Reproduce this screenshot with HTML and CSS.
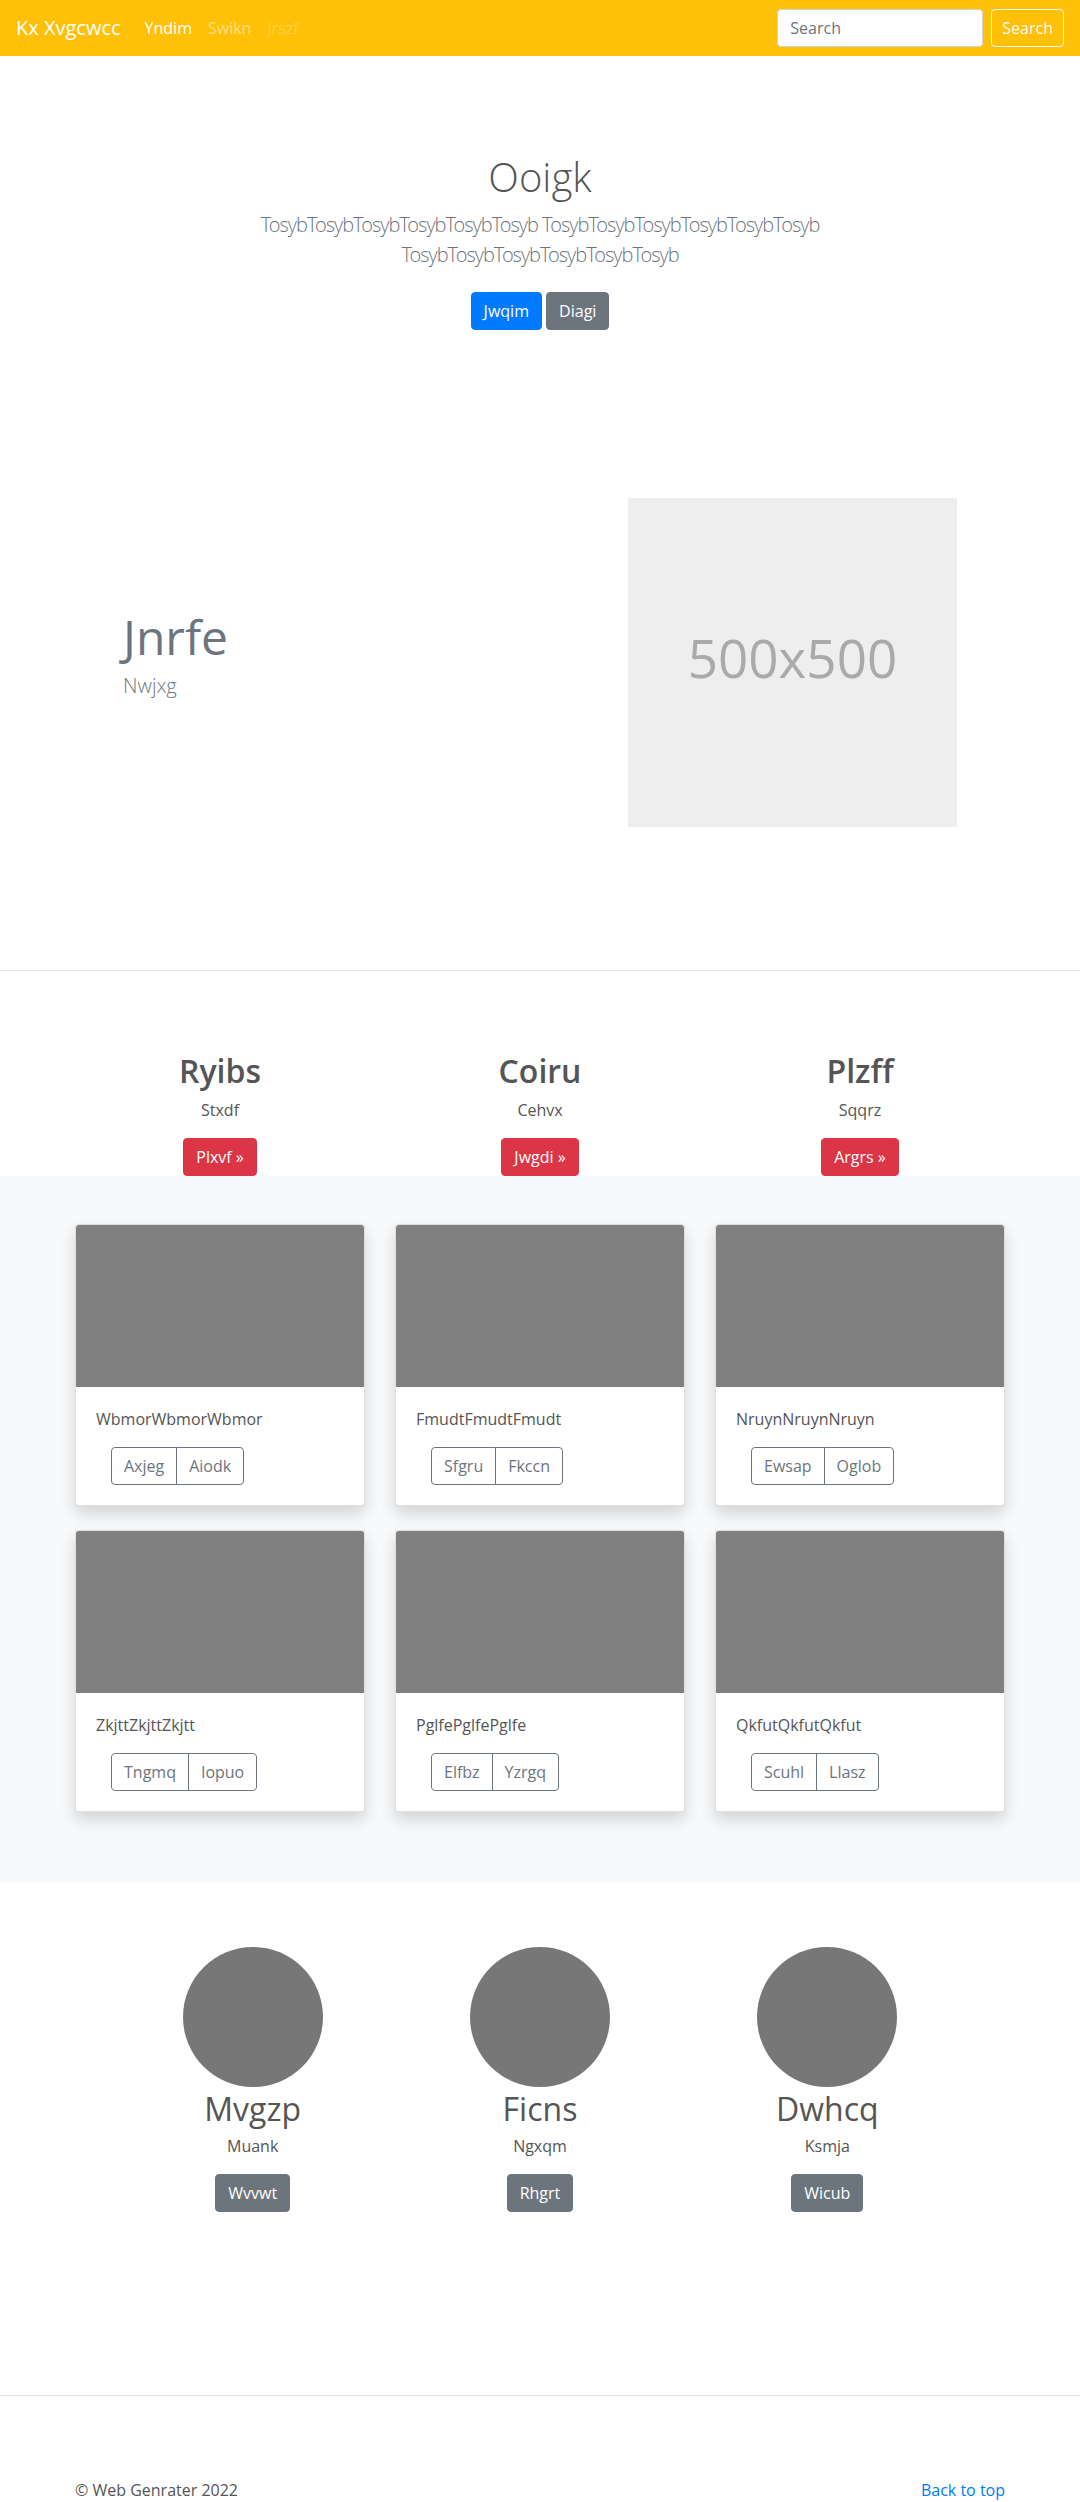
FILE: index.html
```html
<!DOCTYPE html>
<html lang="en">
<head>
<meta charset="utf-8">
<title>Kx Xvgcwcc</title>
<link rel="stylesheet" href="styles.css">
</head>
<body>
<header class="navbar">
  <a class="brand" href="#">Kx Xvgcwcc</a>
  <ul class="nav">
    <li><a class="nav-link active" href="#">Yndim</a></li>
    <li><a class="nav-link" href="#">Swikn</a></li>
    <li><a class="nav-link disabled" href="#">Jrszf</a></li>
  </ul>
  <form class="search">
    <input class="search-input" type="text" placeholder="Search">
    <button class="btn btn-outline-light" type="button">Search</button>
  </form>
</header>

<main>
  <section class="hero">
    <h1 class="hero-title">Ooigk</h1>
    <p class="lead muted hero-lead">TosybTosybTosybTosybTosybTosyb TosybTosybTosybTosybTosybTosyb TosybTosybTosybTosybTosybTosyb</p>
    <p class="hero-actions"><a class="btn btn-primary" href="#">Jwqim</a> <a class="btn btn-secondary" href="#">Diagi</a></p>
  </section>

  <section class="feature">
    <div class="feature-text">
      <h2 class="feature-title">Jnrfe</h2>
      <p class="lead muted feature-lead">Nwjxg</p>
    </div>
    <div class="feature-media">
      <div class="placeholder">500x500</div>
    </div>
  </section>

  <hr class="divider">

  <section class="columns">
    <div class="column">
      <h2 class="column-title">Ryibs</h2>
      <p class="column-text">Stxdf</p>
      <a class="btn btn-danger" href="#">Plxvf &raquo;</a>
    </div>
    <div class="column">
      <h2 class="column-title">Coiru</h2>
      <p class="column-text">Cehvx</p>
      <a class="btn btn-danger" href="#">Jwgdi &raquo;</a>
    </div>
    <div class="column">
      <h2 class="column-title">Plzff</h2>
      <p class="column-text">Sqqrz</p>
      <a class="btn btn-danger" href="#">Argrs &raquo;</a>
    </div>
  </section>

  <section class="album">
    <div class="album-grid">
      <div class="card">
        <div class="card-img"></div>
        <div class="card-body">
          <p class="card-text">WbmorWbmorWbmor</p>
          <div class="btn-group"><a class="btn btn-outline-secondary" href="#">Axjeg</a><a class="btn btn-outline-secondary" href="#">Aiodk</a></div>
        </div>
      </div>
      <div class="card">
        <div class="card-img"></div>
        <div class="card-body">
          <p class="card-text">FmudtFmudtFmudt</p>
          <div class="btn-group"><a class="btn btn-outline-secondary" href="#">Sfgru</a><a class="btn btn-outline-secondary" href="#">Fkccn</a></div>
        </div>
      </div>
      <div class="card">
        <div class="card-img"></div>
        <div class="card-body">
          <p class="card-text">NruynNruynNruyn</p>
          <div class="btn-group"><a class="btn btn-outline-secondary" href="#">Ewsap</a><a class="btn btn-outline-secondary" href="#">Oglob</a></div>
        </div>
      </div>
      <div class="card">
        <div class="card-img"></div>
        <div class="card-body">
          <p class="card-text">ZkjttZkjttZkjtt</p>
          <div class="btn-group"><a class="btn btn-outline-secondary" href="#">Tngmq</a><a class="btn btn-outline-secondary" href="#">Iopuo</a></div>
        </div>
      </div>
      <div class="card">
        <div class="card-img"></div>
        <div class="card-body">
          <p class="card-text">PglfePglfePglfe</p>
          <div class="btn-group"><a class="btn btn-outline-secondary" href="#">Elfbz</a><a class="btn btn-outline-secondary" href="#">Yzrgq</a></div>
        </div>
      </div>
      <div class="card">
        <div class="card-img"></div>
        <div class="card-body">
          <p class="card-text">QkfutQkfutQkfut</p>
          <div class="btn-group"><a class="btn btn-outline-secondary" href="#">Scuhl</a><a class="btn btn-outline-secondary" href="#">Llasz</a></div>
        </div>
      </div>
    </div>
  </section>

  <section class="team">
    <div class="member">
      <div class="avatar"></div>
      <h2 class="member-name">Mvgzp</h2>
      <p class="member-text">Muank</p>
      <a class="btn btn-secondary" href="#">Wvvwt</a>
    </div>
    <div class="member">
      <div class="avatar"></div>
      <h2 class="member-name">Ficns</h2>
      <p class="member-text">Ngxqm</p>
      <a class="btn btn-secondary" href="#">Rhgrt</a>
    </div>
    <div class="member">
      <div class="avatar"></div>
      <h2 class="member-name">Dwhcq</h2>
      <p class="member-text">Ksmja</p>
      <a class="btn btn-secondary" href="#">Wicub</a>
    </div>
  </section>

  <hr class="divider">
</main>

<footer class="footer">
  <p class="copy">&copy; Web Genrater 2022</p>
  <a class="back-top" href="#">Back to top</a>
</footer>
</body>
</html>
```

FILE: styles.css
```css
* { box-sizing: border-box; }

body {
  margin: 0;
  font-family: "Open Sans", "Noto Sans", Arial, sans-serif;
  font-size: 16px;
  line-height: 1.5;
  color: #555;
  background: #fff;
}

a { text-decoration: none; }

p, h1, h2 { margin: 0; }

/* Navbar */
.navbar {
  display: flex;
  align-items: center;
  height: 56px;
  padding: 8px 16px;
  background: #ffc107;
}
.brand {
  font-size: 20px;
  line-height: 30px;
  padding: 5px 0;
  margin-right: 16px;
  color: #fff;
}
.nav {
  display: flex;
  list-style: none;
  margin: 0;
  padding: 0;
}
.nav-link {
  display: block;
  padding: 8px;
  color: rgba(255, 255, 255, 0.5);
}
.nav-link.active { color: #fff; }
.nav-link.disabled { color: rgba(255, 255, 255, 0.25); }

.search {
  margin-left: auto;
  display: flex;
  align-items: center;
}
.search-input {
  width: 206px;
  height: 38px;
  padding: 6px 12px;
  margin-right: 8px;
  font: inherit;
  font-size: 16px;
  color: #495057;
  background: #fff;
  border: 1px solid #ced4da;
  border-radius: 4px;
}
.search-input::placeholder { color: #6c757d; }
.search .btn { padding: 6px 10px; }

/* Buttons */
.btn {
  display: inline-block;
  padding: 6px 12px;
  font-family: inherit;
  font-size: 16px;
  line-height: 24px;
  border: 1px solid transparent;
  border-radius: 4px;
  text-align: center;
  vertical-align: middle;
  cursor: pointer;
}
.btn-outline-light { color: #f8f9fa; border-color: #f8f9fa; background: transparent; }
.btn-primary { color: #fff; background: #007bff; border-color: #007bff; }
.btn-secondary { color: #fff; background: #6c757d; border-color: #6c757d; }
.btn-danger { color: #fff; background: #dc3545; border-color: #dc3545; }
.btn-outline-secondary { color: #6c757d; border-color: #6c757d; background: transparent; }

.lead {
  font-family: "Open Sans Light", "Roboto Light", "Lato Light", "Open Sans", sans-serif;
  font-size: 20px;
  font-weight: 300;
  line-height: 30px;
}
.muted { color: #6c757d; }

/* Hero */
.hero {
  padding: 97px 0 96px;
  text-align: center;
}
.hero-title {
  font-family: "Open Sans Light", "Roboto Light", "Lato Light", "Open Sans", sans-serif;
  font-size: 40px;
  font-weight: 300;
  line-height: 1.2;
  margin-bottom: 9px;
}
.hero-lead {
  max-width: 760px;
  margin: 0 auto 14px;
  letter-spacing: -1px;
}
.hero-actions .btn { margin: 8px 0; }

/* Feature */
.feature {
  display: flex;
  align-items: center;
  width: 960px;
  margin: 0 auto;
  padding: 16px 0 95px;
}
.feature-text,
.feature-media {
  flex: 1 1 0;
  padding: 48px 63px;
}
.feature-media { display: flex; justify-content: flex-end; }
.feature-title {
  font-size: 48px;
  font-weight: 400;
  line-height: 1.2;
  color: #6c757d;
  margin-bottom: 6px;
}
.feature-lead { margin-bottom: 16px; }
.placeholder {
  width: 329px;
  height: 329px;
  padding-bottom: 10px;
  background: #eee;
  color: #aaa;
  font-size: 53px;
  display: flex;
  align-items: center;
  justify-content: center;
}

.divider {
  margin: 0;
  border: 0;
  border-top: 1px solid rgba(0, 0, 0, 0.1);
}

/* Columns */
.columns {
  display: grid;
  grid-template-columns: repeat(3, 1fr);
  width: 960px;
  margin: 0 auto;
  padding-top: 81px;
  text-align: center;
}
.column-title {
  font-size: 32px;
  font-weight: 600;
  line-height: 1.2;
  margin-bottom: 8px;
}
.column-text { margin-bottom: 16px; }

/* Album */
.album {
  background: #f8f9fa;
  padding: 48px 0 70px;
}
.album-grid {
  display: grid;
  grid-template-columns: repeat(3, 1fr);
  gap: 24px 30px;
  width: 930px;
  margin: 0 auto;
}
.card {
  background: #fff;
  border: 1px solid rgba(0, 0, 0, 0.125);
  border-radius: 4px;
  overflow: hidden;
  box-shadow: 0 8px 16px rgba(0, 0, 0, 0.15);
}
.card-img {
  height: 162px;
  background: #808080;
}
.card-body { padding: 20px; }
.card-text { margin-bottom: 16px; }
.btn-group {
  display: inline-flex;
  margin-left: 15px;
}
.btn-group .btn { border-radius: 0; }
.btn-group .btn:first-child { border-radius: 4px 0 0 4px; }
.btn-group .btn:last-child { border-radius: 0 4px 4px 0; margin-left: -1px; }

/* Team */
.team {
  display: grid;
  grid-template-columns: repeat(3, 1fr);
  width: 862px;
  margin: 0 auto;
  padding: 65px 0 183px;
  text-align: center;
}
.avatar {
  width: 140px;
  height: 140px;
  border-radius: 50%;
  background: #777;
  margin: 0 auto;
}
.member-name {
  font-size: 32px;
  font-weight: 400;
  line-height: 1.2;
  margin-top: 3px;
  margin-bottom: 5px;
}
.member-text { margin-bottom: 16px; }

/* Footer */
.footer {
  display: flex;
  justify-content: space-between;
  align-items: flex-start;
  width: 930px;
  margin: 0 auto;
  padding-top: 82px;
}
.back-top { color: #007bff; }
```
